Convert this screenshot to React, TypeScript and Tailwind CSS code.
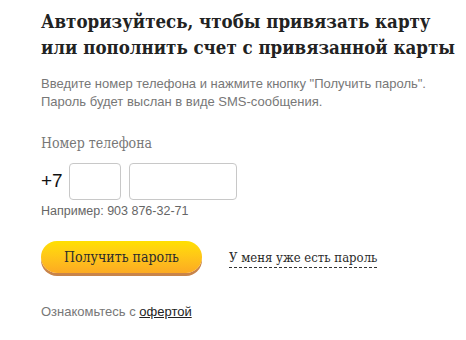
import React from 'react';

const slab = { fontFamily: '"DejaVu Serif Condensed", "DejaVu Serif", serif' };

export default function App() {
    return (
        <div className="w-[466px] h-[340px] bg-white pl-[41px] pt-[9px] overflow-hidden" style={{ fontFamily: '"Liberation Sans", Arial, sans-serif' }}>
            <h1 className="text-[18.5px] leading-[26px] font-bold text-[#222] whitespace-nowrap" style={slab}>
                Авторизуйтесь, чтобы привязать карту<br />или пополнить счет с привязанной карты
            </h1>
            <p className="mt-[14px] text-[13px] leading-[18px] text-[#777]">
                Введите номер телефона и нажмите кнопку "Получить пароль".<br />Пароль будет выслан в виде SMS-сообщения.
            </p>
            <div className="mt-[23px] text-[14px] leading-[18px] text-[#777]" style={slab}>Номер телефона</div>
            <div className="mt-[11px] flex items-center gap-[8px]">
                <span className="text-[19px] text-[#111] w-[20px]">+7</span>
                <input className="w-[52px] h-[37px] border border-[#c8c8c8] rounded-[4px] outline-none" />
                <input className="w-[108px] h-[37px] border border-[#c8c8c8] rounded-[4px] outline-none" />
            </div>
            <div className="mt-[3px] text-[12.5px] leading-[16px] text-[#666]">Например: 903 876-32-71</div>
            <div className="mt-[22px] flex items-center gap-[27px]">
                <button className="w-[161px] h-[32px] rounded-full bg-gradient-to-b from-[#ffe000] to-[#fcaa22] shadow-[0_3px_0_#c8844a] text-[14px] text-[#2b2b2b]" style={slab}>
                    Получить пароль
                </button>
                <span className="text-[13px] text-[#2b2b2b] border-b border-dashed border-[#333] leading-[18px] mt-[2px]" style={slab}>
                    У меня уже есть пароль
                </span>
            </div>
            <div className="mt-[29px] text-[13px] text-[#777]">
                Ознакомьтесь с <a className="text-[#222] underline">офертой</a>
            </div>
        </div>
    );
}
